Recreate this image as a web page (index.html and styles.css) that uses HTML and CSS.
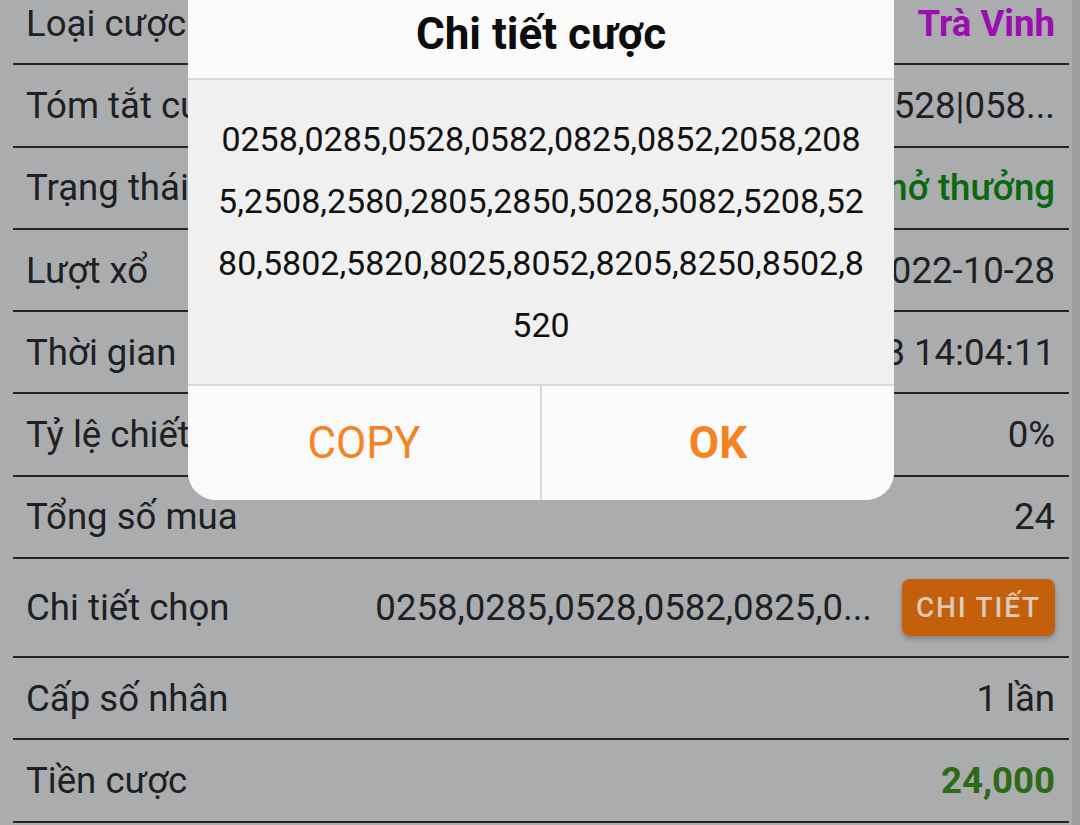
FILE: index.html
```html
<!DOCTYPE html>
<html lang="vi">
<head>
    <meta charset="UTF-8">
    <meta name="viewport" content="width=device-width, initial-scale=1.0">
    <title>Chi tiết cược</title>
    <link rel="stylesheet" href="styles.css">
</head>
<body>

    <div class="screen">
        <main class="detail-list">
            <div class="row">
                <span class="label">Loại cược</span>
                <span class="value value-region">Trà Vinh</span>
            </div>
            <div class="row">
                <span class="label">Tóm tắt cược</span>
                <span class="value">0258|0285|0528|058...</span>
            </div>
            <div class="row">
                <span class="label">Trạng thái</span>
                <span class="value value-status">Chưa mở thưởng</span>
            </div>
            <div class="row">
                <span class="label">Lượt xổ</span>
                <span class="value">2022-10-28</span>
            </div>
            <div class="row">
                <span class="label">Thời gian</span>
                <span class="value">2022-10-28 14:04:11</span>
            </div>
            <div class="row">
                <span class="label">Tỷ lệ chiết khấu</span>
                <span class="value">0%</span>
            </div>
            <div class="row">
                <span class="label">Tổng số mua</span>
                <span class="value">24</span>
            </div>
            <div class="row row-tall">
                <span class="label">Chi tiết chọn</span>
                <span class="value">0258,0285,0528,0582,0825,0...</span>
                <button class="detail-btn">Chi tiết</button>
            </div>
            <div class="row">
                <span class="label">Cấp số nhân</span>
                <span class="value">1 lần</span>
            </div>
            <div class="row">
                <span class="label">Tiền cược</span>
                <span class="value value-money">24,000</span>
            </div>
        </main>
        <div class="scroll-track"></div>
    </div>

    <!-- popup opened by the CHI TIẾT button -->
    <div class="dialog">
        <div class="dialog-title">Chi tiết cược</div>
        <div class="dialog-body">0258,0285,0528,0582,0825,0852,2058,2085,2508,2580,2805,2850,5028,5082,5208,5280,5802,5820,8025,8052,8205,8250,8502,8520</div>
        <div class="dialog-actions">
            <button class="dialog-btn">COPY</button>
            <button class="dialog-btn dialog-btn-ok">OK</button>
        </div>
    </div>

</body>
</html>
```

FILE: styles.css
```css
body {
    margin: 0;
    font-family: Roboto, 'Liberation Sans', sans-serif;
    background-color: #abacae;
    color: #1e2023;
    overflow: hidden;
    height: 825px;
}

.screen {
    display: flex;
    height: 825px;
}

.detail-list {
    flex: 1;
    padding: 0 3px 0 13px;
    margin-top: -17px;
}

.scroll-track {
    width: 8px;
    background-color: #9d9ea0;
}

.row {
    display: flex;
    align-items: center;
    height: 80.3px;
    padding: 0 14px 0 13px;
    border-bottom: 2px solid #222427;
    font-size: 36.6px;
}

.row-tall {
    height: 97px;
}

.label {
    flex: none;
    white-space: nowrap;
}

.value {
    flex: 1;
    text-align: right;
    white-space: nowrap;
    overflow: hidden;
}

.value-region {
    color: #9a0db0;
    font-weight: bold;
}

.value-status {
    color: #0c680e;
    font-weight: 500;
}

.value-money {
    color: #2c6a14;
    font-weight: bold;
}

.detail-btn {
    flex: none;
    margin-left: 30px;
    width: 153px;
    height: 57px;
    padding: 0;
    border: none;
    border-radius: 8px;
    background-color: #c4600c;
    color: #dccabb;
    font-family: inherit;
    font-size: 28px;
    font-weight: 500;
    letter-spacing: 1.8px;
    text-transform: uppercase;
    box-shadow: 0 3px 5px rgba(0, 0, 0, 0.25);
}

/* popup */
.dialog {
    position: absolute;
    top: -14px;
    left: 50%;
    margin-left: -352px;
    width: 706px;
    border-radius: 0 0 28px 28px;
    overflow: hidden;
    background-color: #fafafa;
}

.dialog-title {
    height: 92px;
    line-height: 96px;
    text-align: center;
    font-size: 44px;
    font-weight: bold;
    color: #0d0d0d;
    border-bottom: 2px solid #d9d9d9;
}

.dialog-body {
    height: 248px;
    padding: 28px 27px;
    background-color: #f0f0f0;
    font-size: 34px;
    line-height: 62px;
    text-align: center;
    word-break: break-all;
    color: #111;
}

.dialog-actions {
    display: flex;
    height: 114px;
    border-top: 2px solid #d9d9d9;
}

.dialog-btn {
    flex: 1;
    border: none;
    background-color: #fafafa;
    color: #f5831f;
    font-family: inherit;
    font-size: 44px;
    padding: 0;
}

.dialog-btn-ok {
    font-weight: bold;
    border-left: 2px solid #d9d9d9;
}
```
